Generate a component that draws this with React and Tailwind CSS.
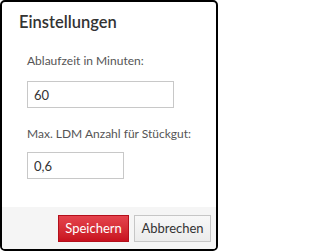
import React, { useState } from 'react';

export default function App() {
  const [minutes, setMinutes] = useState('60');
  const [ldm, setLdm] = useState('0,6');

  return (
    <div className="w-[218px] h-[251px] bg-white">
      <div
        className="w-full h-full flex flex-col border-2 border-black rounded-[5px] overflow-hidden"
        style={{ fontFamily: 'Lato, "Open Sans", sans-serif' }}
      >
        {/* Kopf */}
        <div className="px-[17px] pt-[9px]">
          <h2 className="text-[16.5px] leading-[22px] font-semibold text-[#333]">Einstellungen</h2>
        </div>

        {/* Inhalt */}
        <div className="flex-1 px-[25px] pt-[19px]">
          <label className="block text-[12px] leading-[18px] text-[#555]">Ablaufzeit in Minuten:</label>
          <input
            type="text"
            value={minutes}
            onChange={(e) => setMinutes(e.target.value)}
            className="mt-[11px] block w-[147px] h-[27px] border border-[#c8c8c8] px-[6px] text-[13px] text-[#333] outline-none"
          />

          <label className="block mt-[17px] text-[12px] leading-[18px] text-[#555] whitespace-nowrap">Max. LDM Anzahl für Stückgut:</label>
          <input
            type="text"
            value={ldm}
            onChange={(e) => setLdm(e.target.value)}
            className="mt-[9px] block w-[97px] h-[27px] border border-[#c8c8c8] px-[6px] text-[13px] text-[#333] outline-none"
          />
        </div>

        {/* Fuß */}
        <div className="h-[42px] bg-[#f5f5f5] flex items-start justify-end gap-[5px] pt-[8px] pr-[5px]">
          <button className="h-[27px] w-[71px] text-[13px] text-white border border-[#b3101b] bg-gradient-to-b from-[#e5434d] to-[#c8101e]">
            Speichern
          </button>
          <button className="h-[27px] w-[77px] text-[13px] text-[#333] border border-[#c6c6c6] bg-gradient-to-b from-[#f8f8f8] to-[#ebebeb]">
            Abbrechen
          </button>
        </div>
      </div>
    </div>
  );
}
